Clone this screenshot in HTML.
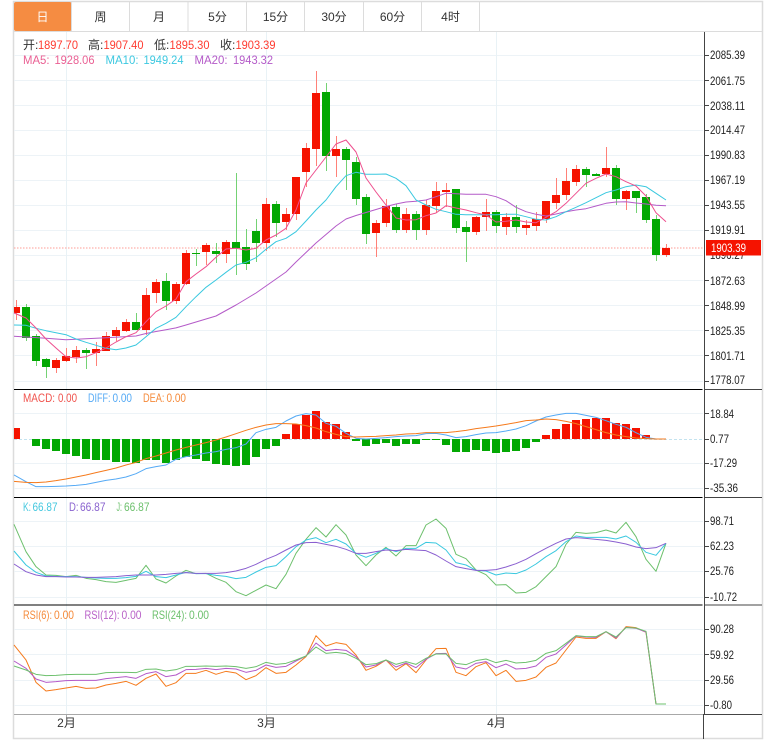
<!DOCTYPE html>
<html>
<head>
<meta charset="utf-8">
<title>K</title>
<style>
html,body{margin:0;padding:0;background:#fff;width:772px;height:745px;overflow:hidden}
svg{display:block;position:absolute;left:0;top:0}
text{font-family:"Liberation Sans","Noto Sans CJK SC",sans-serif;font-size:12px}
.ax text{fill:#222;font-size:11.5px}
.l{fill:none;stroke-width:1;vector-effect:non-scaling-stroke;stroke-linejoin:round}
</style>
</head>
<body>
<svg width="772" height="745" viewBox="0 0 772 745" xmlns="http://www.w3.org/2000/svg">
<!-- frame -->
<rect x="13.5" y="1.5" width="749" height="737" fill="#fff" stroke="#dcdcdc" stroke-width="1.5"/>
<!-- tabs -->
<rect x="14" y="2" width="57.5" height="29" rx="2" fill="#f58c42"/>
<path d="M71.5 2V31.5M129.5 2V31.5M188 2V31.5M246.5 2V31.5M304.5 2V31.5M363.5 2V31.5M421.5 2V31.5M479.5 2V31.5M14 31.5H762" stroke="#dcdcdc" stroke-width="1" fill="none"/>
<g text-anchor="middle" fill="#333">
<text x="42.5" y="21" fill="#fff">日</text>
<text x="100.5" y="21">周</text>
<text x="159" y="21">月</text>
<text x="217.5" y="21">5分</text>
<text x="275.5" y="21">15分</text>
<text x="334" y="21">30分</text>
<text x="392.5" y="21">60分</text>
<text x="450.5" y="21">4时</text>
</g>
<!-- grid -->
<path d="M14 55.5H703M14 80.5H703M14 105.5H703M14 130.5H703M14 155.5H703M14 180.5H703M14 205.5H703M14 230.5H703M14 255.5H703M14 280.5H703M14 305.5H703M14 330.5H703M14 355.5H703M14 381.5H703M14 413.5H703M14 463.5H703M14 488.5H703M14 521.5H703M14 546.5H703M14 571.5H703M14 597.5H703M14 629.5H703M14 654.5H703M14 680.5H703M14 705.5H703" stroke="#edf3f7" stroke-width="1" fill="none"/>
<path d="M66.5 32V714M266.5 32V714M496.5 32V714" stroke="#e9f2f6" stroke-width="1" fill="none"/>
<!-- last price dotted -->
<path d="M14 248H704" stroke="#ff9d96" stroke-width="1" stroke-dasharray="1.5 1.5" fill="none"/>
<!-- wicks -->
<path d="M16.5 300V320M56.5 358V373M66.5 348V362M76.5 346V363M96.5 342V366M106.5 332V351M116.5 327V341M126.5 319V332M146.5 288V335M156.5 279V303M176.5 282V304M186.5 250V285M206.5 243V265M226.5 240V263M266.5 198V251M286.5 208V230M296.5 177V220M306.5 143V187M316.5 71V166M336.5 136V177M376.5 220V257M386.5 199V227M406.5 208V233M426.5 200V235M436.5 182V213M446.5 183V207M476.5 216V235M486.5 199V231M506.5 213V235M526.5 220V235M536.5 212V231M546.5 201V223M556.5 178V209M566.5 168V200M576.5 165V186M606.5 147V177M626.5 190V210M666.5 244V257" stroke="#ff8178" stroke-width="1" fill="none"/>
<path d="M26.5 304V341M36.5 334V366M46.5 358V378M86.5 348V369M136.5 313V330M166.5 273V310M196.5 249V266M216.5 243V263M236.5 173V275M246.5 229V270M256.5 219V262M276.5 201V237M326.5 83V171M346.5 147V190M356.5 157V205M366.5 194V244M396.5 204V233M416.5 211V240M456.5 189V233M466.5 221V262M496.5 210V233M516.5 205V233M586.5 167V187M596.5 173V176M616.5 165V205M636.5 191V213M646.5 194V223M656.5 215V261" stroke="#74d274" stroke-width="1" fill="none"/>
<!-- bodies -->
<path fill="#f51300" d="M14 307h6v6h-6zM52 360h8v8h-8zM62 356h8v5h-8zM72 350h8v7h-8zM92 349h8v4h-8zM102 336h8v15h-8zM112 330h8v6h-8zM122 322h8v9h-8zM142 295h8v35h-8zM152 282h8v11h-8zM172 284h8v17h-8zM182 253h8v31h-8zM202 245h8v7h-8zM222 242h8v12h-8zM262 204h8v39h-8zM282 214h8v8h-8zM292 177h8v37h-8zM302 148h8v24h-8zM312 93h8v56h-8zM332 149h8v7h-8zM372 223h8v10h-8zM382 206h8v17h-8zM402 214h8v16h-8zM422 205h8v25h-8zM432 191h8v15h-8zM442 190h8v2h-8zM472 217h8v15h-8zM482 212h8v5h-8zM502 217h8v10h-8zM522 225h8v3h-8zM532 219h8v7h-8zM542 201h8v18h-8zM552 195h8v8h-8zM562 181h8v14h-8zM572 169h8v13h-8zM602 168h8v6h-8zM622 191h8v8h-8zM662 248h8v7h-8z"/>
<path fill="#03a803" d="M22 307h8v31h-8zM32 336h8v25h-8zM42 359h8v8h-8zM82 350h8v3h-8zM132 322h8v8h-8zM162 281h8v20h-8zM192 253h8v1h-8zM212 251h8v3h-8zM232 242h8v6h-8zM242 247h8v17h-8zM252 231h8v12h-8zM272 204h8v19h-8zM322 92h8v64h-8zM342 149h8v11h-8zM352 162h8v37h-8zM362 197h8v37h-8zM392 207h8v23h-8zM412 214h8v16h-8zM452 189h8v39h-8zM462 227h8v5h-8zM492 212h8v14h-8zM512 217h8v10h-8zM582 169h8v6h-8zM592 174h8v2h-8zM612 168h8v31h-8zM632 191h8v7h-8zM642 197h8v23h-8zM652 219h8v36h-8z"/>
<!-- MA lines -->
<polyline class="l" stroke="#b45ac8" points="14,336.3 26,337 46,338.2 66,339.7 86,338.7 106,337.7 126,336.6 136,336 146,333.5 156,331.5 166,329.7 176,327.9 186,325 196,322 206,319 216,316 226,310.5 236,305 246,299 256,293 266,286 276,279 286,272 296,262 306,252.5 316,243 326,234.5 336,226 346,219 356,215.5 366,212.5 376,209.5 386,206.5 396,204 406,202 416,201.3 426,200 436,196.7 446,193.3 456,193.7 466,194.3 476,194.3 486,194.3 496,196.7 506,200.7 516,207.3 526,211.7 536,214.3 546,216 556,214 566,211.7 576,210 586,208.7 596,206 606,203.3 616,202 626,201.7 636,203 646,204 656,205.3 666,205.7"/>
<polyline class="l" stroke="#39c8df" points="14,325 26,325.3 36,328.3 46,330.7 56,332.7 66,334.7 76,339 86,342.3 96,345.3 106,348.3 116,349.7 126,348 136,345 146,336.7 156,328.3 166,323.3 176,317.3 186,306.7 196,296.7 206,287.3 216,280 226,272.3 236,265 246,262.3 256,257.7 266,249.3 276,241.7 286,238.3 296,231.7 306,221 316,210 326,200 336,186.7 346,175.7 356,172.3 366,174.3 376,174.3 386,174 396,178.3 406,185.7 416,200 426,205 436,209.3 446,211.7 456,214.3 466,214.7 476,214.7 486,214.7 496,214.7 506,214.3 516,214.3 526,216.7 536,219.3 546,220 556,216.7 566,211.7 576,207.3 586,202.7 596,197.7 606,192.7 616,190 626,186.7 636,185 646,186.7 656,193.3 666,200"/>
<polyline class="l" stroke="#ee4f8e" points="14,313 26,318 36,328 46,339 56,348 66,356.7 76,358 86,356.7 96,352.7 106,348 116,342 126,336.7 136,332.7 146,321.7 156,311.7 166,306 176,299 186,281.7 196,274 206,266.7 216,257.3 226,249 236,248.3 246,250 256,248.3 266,240 276,235 286,228.3 296,210 306,183 316,170 326,157 336,144 346,140 356,152 366,178 376,192 386,205 396,218 406,220 416,219.7 426,215.7 436,213 446,205.7 456,208 466,210 476,212.7 486,215 496,222 506,221.3 516,220 526,222 536,222.7 546,217.3 556,211.7 566,203.3 576,193.3 586,183.3 596,178.3 606,174 616,176.7 626,181.7 636,186 646,196 656,212.7 666,221.7"/>
<!-- MACD -->
<path d="M14 439.5H703" stroke="#c4e3ef" stroke-width="1" stroke-dasharray="3 2" fill="none"/>
<path fill="#f51300" d="M14 428h6v11h-6zM282 434h8v5h-8zM292 424h8v15h-8zM302 415h8v24h-8zM312 411h8v28h-8zM322 422h8v17h-8zM332 424h8v15h-8zM342 432h8v7h-8zM542 435h8v4h-8zM552 429h8v10h-8zM562 424h8v15h-8zM572 420h8v19h-8zM582 419h8v20h-8zM592 418h8v21h-8zM602 418h8v21h-8zM612 423h8v16h-8zM622 424h8v15h-8zM632 428h8v11h-8zM642 435h8v4h-8z"/>
<path fill="#03a803" d="M32 439h8v7h-8zM42 439h8v10h-8zM52 439h8v12h-8zM62 439h8v15h-8zM72 439h8v17h-8zM82 439h8v20h-8zM92 439h8v21h-8zM102 439h8v21h-8zM112 439h8v23h-8zM122 439h8v23h-8zM132 439h8v24h-8zM142 439h8v21h-8zM152 439h8v21h-8zM162 439h8v24h-8zM172 439h8v21h-8zM182 439h8v18h-8zM192 439h8v20h-8zM202 439h8v22h-8zM212 439h8v25h-8zM222 439h8v26h-8zM232 439h8v27h-8zM242 439h8v26h-8zM252 439h8v18h-8zM262 439h8v10h-8zM272 439h8v7h-8zM352 439h8v2h-8zM362 439h8v7h-8zM372 439h8v5h-8zM382 439h8v4h-8zM392 439h8v7h-8zM402 439h8v5h-8zM412 439h8v5h-8zM422 439h8v1h-8zM432 439h8v1h-8zM442 439h8v6h-8zM452 439h8v13h-8zM462 439h8v13h-8zM472 439h8v11h-8zM482 439h8v12h-8zM492 439h8v14h-8zM502 439h8v13h-8zM512 439h8v12h-8zM522 439h8v9h-8zM532 439h8v3h-8z"/>
<g transform="translate(0,385) scale(1,.33333)">
<polyline class="l" stroke="#55aaf5" points="14,270 26,290 36,305 46,305 56,304 66,303 76,301 86,298 96,292 106,286 116,282 126,276 136,266 146,251 156,245 166,240 176,223 186,215 196,210 206,204 216,200 226,193 236,188 246,177 256,143 266,133 276,127 286,108 296,93 306,86 316,90 326,115 336,124 346,145 356,160 366,162 376,160 386,158 396,155 406,153 416,152 426,146 436,145 446,150 456,158 466,155 476,149 486,144 496,143 506,138 516,132 526,122 536,108 546,96 556,90 566,85 576,85 586,91 596,97 606,107 616,118 626,127 636,143 646,157 656,162 666,162"/>
<polyline class="l" stroke="#f57a1c" points="14,289 26,292 36,293 46,291 56,287 66,282 76,276 86,270 96,263 106,256 116,249 126,240 136,232 146,221 156,213 166,204 176,195 186,187 196,180 206,173 216,165 226,156 236,146 246,136 256,127 266,120 276,116 286,116 296,117 306,122 316,129 326,140 336,148 346,155 356,156 366,155 376,154 386,152 396,150 406,147 416,146 426,143 436,143 446,143 456,140 466,136 476,131 486,127 496,123 506,118 516,113 526,107 536,105 546,102 556,104 566,109 576,116 586,125 596,134 606,143 616,150 626,155 636,159 646,161 656,162 666,162"/>
</g>
<!-- KDJ -->
<g transform="translate(0,495) scale(1,.33333)">
<polyline class="l" stroke="#6dc06d" points="14,88 26,170 36,215 46,240 56,241 66,245 76,241 86,250 96,254 106,260 116,262 126,256 136,250 146,211 156,252 166,264 176,243 186,226 196,236 206,235 216,250 226,262 236,290 246,302 256,286 266,270 276,281 286,238 296,175 306,133 316,98 326,126 336,89 346,120 356,180 366,212 376,180 386,157 396,183 406,152 416,152 426,90 436,72 446,100 456,178 466,191 476,225 486,239 496,270 506,269 516,294 526,292 536,275 546,245 556,215 566,148 576,112 586,115 596,113 606,105 616,114 626,82 636,125 646,193 656,229 666,145"/>
<polyline class="l" stroke="#39c8df" points="14,168 26,210 36,232 46,243 56,244 66,245 76,245 86,247 96,249 106,250 116,250 126,248 136,244 146,229 156,245 166,248 176,240 186,232 196,236 206,236 216,241 226,244 236,251 246,247 256,231 266,217 276,212 286,185 296,155 306,135 316,128 326,143 336,133 346,147 356,175 366,187 376,175 386,160 396,170 406,160 416,160 426,142 436,144 446,165 456,203 466,210 476,226 486,228 496,240 506,234 516,236 526,225 536,207 546,185 556,167 566,140 576,123 586,127 596,127 606,127 616,132 626,123 636,142 646,172 656,181 666,145"/>
<polyline class="l" stroke="#8a5fd0" stroke-width="1.2" points="14,207 26,230 36,240 46,245 56,245 66,246 76,246 86,247 96,247 106,246 116,245 126,242 136,240 146,240 156,240 166,238 176,235 186,233 196,235 206,235 216,235 226,233 236,228 246,220 256,208 266,193 276,181 286,165 296,150 306,143 316,142 326,148 336,154 346,163 356,175 366,175 376,170 386,165 396,167 406,163 416,165 426,167 436,180 446,198 456,215 466,221 476,226 486,226 496,224 506,216 516,206 526,193 536,176 546,160 556,145 566,132 576,128 586,130 596,133 606,136 616,141 626,147 636,156 646,161 656,158 666,145"/>
</g>
<!-- RSI -->
<g transform="translate(0,605) scale(1,.33333)">
<polyline class="l" stroke="#f57a1c" points="14,120 26,165 36,232 46,258 56,254 66,249 76,244 86,250 96,249 106,240 116,235 126,229 136,241 146,220 156,207 166,244 176,233 186,205 196,205 206,196 216,208 226,199 236,204 246,224 256,212 266,188 276,205 286,202 296,180 306,155 316,92 326,123 336,113 346,118 356,150 366,196 376,184 386,165 396,196 406,176 416,203 426,165 436,131 446,130 456,202 466,212 476,185 486,173 496,212 506,196 516,229 526,226 536,216 546,187 556,174 566,135 576,96 586,100 596,100 606,80 616,101 626,65 636,68 646,82 656,297 666,297"/>
<polyline class="l" stroke="#b45ac8" points="14,168 26,190 36,222 46,232 56,230 66,227 76,226 86,226 96,226 106,221 116,218 126,215 136,220 146,206 156,200 166,215 176,210 186,194 196,193 206,190 216,194 226,190 236,192 246,202 256,196 266,180 276,187 286,184 296,168 306,153 316,114 326,137 336,133 346,136 356,155 366,186 376,180 386,165 396,186 406,174 416,188 426,163 436,146 446,145 456,186 466,192 476,175 486,170 496,188 506,177 516,192 526,190 536,183 546,157 556,147 566,120 576,93 586,96 596,97 606,80 616,99 626,67 636,70 646,81 656,297 666,297"/>
<polyline class="l" stroke="#6dc06d" points="14,183 26,195 36,208 46,212 56,211 66,209 76,208 86,208 96,208 106,203 116,202 126,202 136,203 146,193 156,192 166,198 176,194 186,184 196,184 206,183 216,184 226,183 236,185 246,190 256,185 266,172 276,178 286,175 296,165 306,153 316,126 326,145 336,142 346,146 356,160 366,179 376,176 386,165 396,178 406,170 416,178 426,160 436,147 446,147 456,175 466,179 476,167 486,162 496,173 506,166 516,174 526,172 536,166 546,145 556,137 566,115 576,92 586,95 596,95 606,80 616,96 626,68 636,69 646,79 656,297 666,297"/>
</g>
<!-- separators -->
<path d="M14 389.5H702.5M14 497.5H702.5M14 605H702.5" stroke="#000" stroke-width="1" fill="none"/>
<path d="M14 714.5H703" stroke="#a8a8a8" stroke-width="1" fill="none"/>
<path d="M66.5 714V718M266.5 714V718M496.5 714V718" stroke="#a8a8a8" stroke-width="1" fill="none"/>
<!-- axis -->
<path d="M704.5 32V714M703.5 714V739M704 389.5H762M704 497.5H762M704 605H762M703 714.5H762" stroke="#444" stroke-width="1" fill="none"/>
<path d="M704 55.5H709M704 80.5H709M704 105.5H709M704 130.5H709M704 155.5H709M704 180.5H709M704 205.5H709M704 230.5H709M704 280.5H709M704 305.5H709M704 330.5H709M704 355.5H709M704 381.5H709M704 413.5H709M704 439.5H709M704 463.5H709M704 488.5H709M704 521.5H709M704 546.5H709M704 571.5H709M704 597.5H709M704 629.5H709M704 654.5H709M704 680.5H709M704 705.5H709" stroke="#444" stroke-width="1" fill="none"/>
<g class="ax">
<text x="710" y="59" textLength="35" lengthAdjust="spacingAndGlyphs">2085.39</text>
<text x="710" y="85" textLength="35" lengthAdjust="spacingAndGlyphs">2061.75</text>
<text x="710" y="110" textLength="35" lengthAdjust="spacingAndGlyphs">2038.11</text>
<text x="710" y="134" textLength="35" lengthAdjust="spacingAndGlyphs">2014.47</text>
<text x="710" y="159" textLength="35" lengthAdjust="spacingAndGlyphs">1990.83</text>
<text x="710" y="184" textLength="35" lengthAdjust="spacingAndGlyphs">1967.19</text>
<text x="710" y="209" textLength="35" lengthAdjust="spacingAndGlyphs">1943.55</text>
<text x="710" y="234" textLength="35" lengthAdjust="spacingAndGlyphs">1919.91</text>
<text x="710" y="259" textLength="35" lengthAdjust="spacingAndGlyphs">1896.27</text>
<text x="710" y="285" textLength="35" lengthAdjust="spacingAndGlyphs">1872.63</text>
<text x="710" y="310" textLength="35" lengthAdjust="spacingAndGlyphs">1848.99</text>
<text x="710" y="335" textLength="35" lengthAdjust="spacingAndGlyphs">1825.35</text>
<text x="710" y="360" textLength="35" lengthAdjust="spacingAndGlyphs">1801.71</text>
<text x="710" y="384" textLength="35" lengthAdjust="spacingAndGlyphs">1778.07</text>
<text x="710" y="418" textLength="24" lengthAdjust="spacingAndGlyphs">18.84</text>
<text x="710" y="443" textLength="19" lengthAdjust="spacingAndGlyphs">0.77</text>
<text x="710" y="467" textLength="27" lengthAdjust="spacingAndGlyphs">-17.29</text>
<text x="710" y="492" textLength="28" lengthAdjust="spacingAndGlyphs">-35.36</text>
<text x="710" y="525" textLength="24" lengthAdjust="spacingAndGlyphs">98.71</text>
<text x="710" y="550" textLength="24" lengthAdjust="spacingAndGlyphs">62.23</text>
<text x="710" y="575" textLength="24" lengthAdjust="spacingAndGlyphs">25.76</text>
<text x="710" y="601" textLength="27" lengthAdjust="spacingAndGlyphs">-10.72</text>
<text x="710" y="633" textLength="24" lengthAdjust="spacingAndGlyphs">90.28</text>
<text x="710" y="659" textLength="24" lengthAdjust="spacingAndGlyphs">59.92</text>
<text x="710" y="684" textLength="24" lengthAdjust="spacingAndGlyphs">29.56</text>
<text x="710" y="709" textLength="22" lengthAdjust="spacingAndGlyphs">-0.80</text>
</g>
<!-- price tag -->
<rect x="706" y="240" width="55" height="15.5" fill="#f51300"/>
<text x="711" y="252" fill="#fff" textLength="35" lengthAdjust="spacingAndGlyphs">1903.39</text>
<!-- x labels -->
<g fill="#333" text-anchor="middle">
<text x="66.5" y="727">2月</text>
<text x="266.5" y="727">3月</text>
<text x="496.5" y="727">4月</text>
</g>
<!-- legend -->
<g fill="#333">
<text x="23" y="49">开:</text><text x="88" y="49">高:</text><text x="154" y="49">低:</text><text x="220" y="49">收:</text>
</g>
<g fill="#ff3b30">
<text x="38" y="49" textLength="40" lengthAdjust="spacingAndGlyphs">1897.70</text>
<text x="103.5" y="49" textLength="40" lengthAdjust="spacingAndGlyphs">1907.40</text>
<text x="169.5" y="49" textLength="40" lengthAdjust="spacingAndGlyphs">1895.30</text>
<text x="235.5" y="49" textLength="40" lengthAdjust="spacingAndGlyphs">1903.39</text>
</g>
<g fill="#ea5f93">
<text x="23" y="64" textLength="26.5" lengthAdjust="spacingAndGlyphs">MA5:</text>
<text x="54.5" y="64" textLength="40" lengthAdjust="spacingAndGlyphs">1928.06</text>
</g>
<g fill="#3cc8e0">
<text x="105.5" y="64" textLength="33" lengthAdjust="spacingAndGlyphs">MA10:</text>
<text x="143.5" y="64" textLength="40" lengthAdjust="spacingAndGlyphs">1949.24</text>
</g>
<g fill="#b45ac8">
<text x="194.5" y="64" textLength="33" lengthAdjust="spacingAndGlyphs">MA20:</text>
<text x="233" y="64" textLength="40" lengthAdjust="spacingAndGlyphs">1943.32</text>
</g>
<g fill="#f0534d">
<text x="23" y="402" textLength="32" lengthAdjust="spacingAndGlyphs">MACD:</text>
<text x="58" y="402" textLength="19" lengthAdjust="spacingAndGlyphs">0.00</text>
</g>
<g fill="#55aaf5">
<text x="88" y="402" textLength="22.5" lengthAdjust="spacingAndGlyphs">DIFF:</text>
<text x="112.5" y="402" textLength="19.5" lengthAdjust="spacingAndGlyphs">0.00</text>
</g>
<g fill="#f58a3a">
<text x="143" y="402" textLength="21.5" lengthAdjust="spacingAndGlyphs">DEA:</text>
<text x="166.5" y="402" textLength="19.5" lengthAdjust="spacingAndGlyphs">0.00</text>
</g>
<g fill="#45c8df">
<text x="23" y="511" textLength="8" lengthAdjust="spacingAndGlyphs">K:</text>
<text x="32.5" y="511" textLength="25" lengthAdjust="spacingAndGlyphs">66.87</text>
</g>
<g fill="#8a63cf">
<text x="69" y="511" textLength="9.5" lengthAdjust="spacingAndGlyphs">D:</text>
<text x="80" y="511" textLength="25.5" lengthAdjust="spacingAndGlyphs">66.87</text>
</g>
<g fill="#6dc06d">
<text x="116.5" y="511" textLength="5.5" lengthAdjust="spacingAndGlyphs">J:</text>
<text x="124" y="511" textLength="25.5" lengthAdjust="spacingAndGlyphs">66.87</text>
</g>
<g fill="#f58a3a">
<text x="23" y="619" textLength="29" lengthAdjust="spacingAndGlyphs">RSI(6):</text>
<text x="54" y="619" textLength="20" lengthAdjust="spacingAndGlyphs">0.00</text>
</g>
<g fill="#b962c8">
<text x="84.5" y="619" textLength="35" lengthAdjust="spacingAndGlyphs">RSI(12):</text>
<text x="121.5" y="619" textLength="20" lengthAdjust="spacingAndGlyphs">0.00</text>
</g>
<g fill="#6dc06d">
<text x="152" y="619" textLength="35" lengthAdjust="spacingAndGlyphs">RSI(24):</text>
<text x="189" y="619" textLength="20" lengthAdjust="spacingAndGlyphs">0.00</text>
</g>
</svg>
</body>
</html>
